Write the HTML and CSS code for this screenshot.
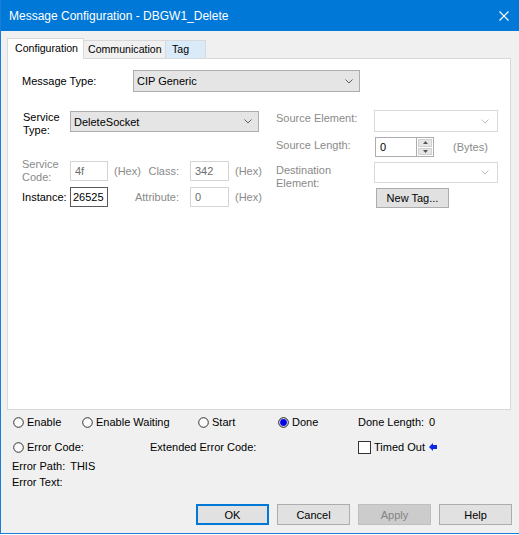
FILE: index.html
```html
<!DOCTYPE html>
<html>
<head>
<meta charset="utf-8">
<link rel="stylesheet" href="styles.css">
</head>
<body>
<div class="window">
  <div class="titlebar">
    <span class="title">Message Configuration - DBGW1_Delete</span>
    <svg class="close" width="10" height="10" viewBox="0 0 10 10"><path d="M0.5 0.5 L9.5 9.5 M9.5 0.5 L0.5 9.5" stroke="#fff" stroke-width="1.1" fill="none"/></svg>
  </div>
  <div class="tabs">
    <div class="tab active">Configuration</div>
    <div class="tab comm">Communication</div>
    <div class="tab tag">Tag</div>
  </div>
  <div class="panel">
    <div class="msg-row">
      <span class="msg-lbl">Message Type:</span>
      <div class="combo combo-msg"><span>CIP Generic</span><svg class="chev" width="8" height="5" viewBox="0 0 8 5"><path d="M0.5 0.5 L4 4 L7.5 0.5" fill="none" stroke="#606060"/></svg></div>
    </div>
    <div class="section">
      <div class="left">
        <div class="svc-row">
          <span class="two svc-lbl">Service<br>Type:</span>
          <div class="combo combo-svc"><span>DeleteSocket</span><svg class="chev" width="8" height="5" viewBox="0 0 8 5"><path d="M0.5 0.5 L4 4 L7.5 0.5" fill="none" stroke="#606060"/></svg></div>
        </div>
        <div class="lrow r-code">
          <span class="two dis">Service<br>Code:</span>
          <div class="field field-dis">4f</div>
          <div class="mid"><span class="dis">(Hex)</span><span class="dis">Class:</span></div>
          <div class="field field-dis">342</div>
          <span class="hex dis">(Hex)</span>
        </div>
        <div class="lrow r-inst">
          <span>Instance:</span>
          <div class="field field-on">26525</div>
          <div class="mid"><span></span><span class="dis">Attribute:</span></div>
          <div class="field field-dis">0</div>
          <span class="hex dis">(Hex)</span>
        </div>
      </div>
      <div class="right">
        <span class="rlbl dis">Source Element:</span>
        <div class="combo combo-dis"><span></span><svg class="chev" width="8" height="5" viewBox="0 0 8 5"><path d="M0.5 0.5 L4 4 L7.5 0.5" fill="none" stroke="#c0c0c0"/></svg></div>
        <span class="rlbl dis">Source Length:</span>
        <div class="len">
          <div class="field len-field">0</div>
          <div class="spin">
            <div class="spin-btn"><svg width="5" height="3" viewBox="0 0 5 3"><path d="M0 3 L2.5 0 L5 3 Z" fill="#555"/></svg></div>
            <div class="spin-btn"><svg width="5" height="3" viewBox="0 0 5 3"><path d="M0 0 L2.5 3 L5 0 Z" fill="#555"/></svg></div>
          </div>
          <span class="bytes dis">(Bytes)</span>
        </div>
        <span class="rlbl dis">Destination<br>Element:</span>
        <div class="combo combo-dis"><span></span><svg class="chev" width="8" height="5" viewBox="0 0 8 5"><path d="M0.5 0.5 L4 4 L7.5 0.5" fill="none" stroke="#c0c0c0"/></svg></div>
        <span></span>
        <div><div class="btn newtag">New Tag...</div></div>
      </div>
    </div>
  </div>
  <div class="status">
    <div class="opt c1"><svg width="11" height="11" viewBox="0 0 11 11"><circle cx="5.5" cy="5.5" r="4.8" fill="#fbfbfb" stroke="#333"/></svg><span>Enable</span></div>
    <div class="opt c2"><svg width="11" height="11" viewBox="0 0 11 11"><circle cx="5.5" cy="5.5" r="4.8" fill="#fbfbfb" stroke="#333"/></svg><span>Enable Waiting</span></div>
    <div class="opt c4"><svg width="11" height="11" viewBox="0 0 11 11"><circle cx="5.5" cy="5.5" r="4.8" fill="#fbfbfb" stroke="#333"/></svg><span>Start</span></div>
    <div class="opt c5"><svg width="11" height="11" viewBox="0 0 11 11"><circle cx="5.5" cy="5.5" r="4.8" fill="#fbfbfb" stroke="#111"/><circle cx="5.5" cy="5.5" r="3.4" fill="#0000e8"/></svg><span>Done</span></div>
    <div class="opt c6"><span class="dl">Done Length:</span><span>0</span></div>
    <div class="opt c12"><svg width="11" height="11" viewBox="0 0 11 11"><circle cx="5.5" cy="5.5" r="4.8" fill="#fbfbfb" stroke="#333"/></svg><span>Error Code:</span></div>
    <div class="opt c35"><span>Extended Error Code:</span></div>
    <div class="opt c6"><span class="check"></span><span>Timed Out</span><svg class="arrow" width="8" height="8" viewBox="0 0 8 8"><path d="M0 4 L4 0 L4 2 L8 2 L8 6 L4 6 L4 8 Z" fill="#0a28e6"/></svg></div>
  </div>
  <div class="err err-path"><span class="err-lbl">Error Path:</span><span>THIS</span></div>
  <div class="err err-text"><span>Error Text:</span></div>
  <div class="buttons">
    <div class="btn ok">OK</div>
    <div class="btn">Cancel</div>
    <div class="btn apply">Apply</div>
    <div class="btn">Help</div>
  </div>
</div>
</body>
</html>
```

FILE: styles.css
```css
html, body {
  margin: 0;
  padding: 0;
  background: #ffffff;
}

body {
  font-family: "Liberation Sans", Arial, sans-serif;
  font-size: 11px;
  color: #000;
}

.window {
  width: 519px;
  height: 534px;
  box-sizing: border-box;
  border-left: 1px solid #1a7ed6;
  border-bottom: 1px solid #1a7ed6;
  background: #f0f0f0;
  display: flex;
  flex-direction: column;
}

.titlebar {
  height: 31px;
  flex: none;
  background: #0078d7;
  color: #fff;
  display: flex;
  align-items: center;
  justify-content: space-between;
  padding: 0 10px 0 8px;
  font-size: 12px;
}

.title {
  line-height: 16px;
}

.close {
  display: block;
}

.tabs {
  display: flex;
  align-items: flex-end;
  height: 20px;
  margin: 7px 0 0 6px;
}

.tab {
  box-sizing: border-box;
  height: 18px;
  border: 1px solid #d9d9d9;
  border-bottom: 0;
  line-height: 17px;
  background: #f0f0f0;
  white-space: nowrap;
  font-size: 10.6px;
}

.tab.active {
  height: 21px;
  width: 77px;
  padding-left: 7px;
  line-height: 19px;
  background: #fff;
  margin-bottom: -1px;
  position: relative;
  z-index: 1;
}

.tab.comm {
  width: 82px;
  padding-left: 4px;
  border-left: 0;
}

.tab.tag {
  width: 40px;
  padding-left: 6px;
  border-left: 0;
  background: #d9eaf9;
}

.panel {
  box-sizing: border-box;
  width: 504px;
  height: 352px;
  flex: none;
  margin-left: 6px;
  background: #fff;
  border: 1px solid #d9d9d9;
  padding: 11px 0 0 14px;
}

.msg-row {
  display: flex;
  align-items: center;
  height: 22px;
}

.msg-lbl {
  width: 111px;
}

.combo {
  box-sizing: border-box;
  display: flex;
  align-items: center;
  justify-content: space-between;
  padding: 0 6px 0 3px;
  background: #e5e5e5;
  border: 1px solid #adadad;
}

.combo-msg {
  width: 227px;
  height: 22px;
}

.chev {
  display: block;
}

.section {
  display: flex;
  margin-top: 18px;
}

.left {
  width: 254px;
  padding-top: 1px;
}

.two {
  line-height: 13px;
}

.svc-row {
  display: flex;
  align-items: flex-start;
}

.svc-lbl {
  width: 48px;
  padding-left: 1px;
  box-sizing: border-box;
}

.combo-svc {
  width: 189px;
  height: 21px;
}

.lrow {
  display: grid;
  grid-template-columns: 48px 38px 82px 39px auto;
  grid-template-rows: 20px;
  align-items: center;
}

.r-code {
  margin-top: 24px;
}

.r-inst {
  margin-top: 6px;
}

.dis {
  color: #8a8a8a;
}

.field {
  box-sizing: border-box;
  height: 20px;
  line-height: 18px;
  padding-left: 4px;
  background: #fff;
  border: 1px solid #cfcfcf;
}

.field-dis {
  color: #6d6d6d;
  border-color: #d4d4d4;
}

.field-on {
  border-color: #5a5a5a;
  padding-left: 2px;
}

.mid {
  display: flex;
  justify-content: space-between;
  padding: 0 11px 0 6px;
}

.hex {
  padding-left: 6px;
}

.right {
  display: grid;
  grid-template-columns: 98px 124px;
  grid-template-rows: 22px 20px 21px 20px;
  row-gap: 5px;
}

.rlbl {
  align-self: start;
  margin-top: 2px;
  line-height: 13px;
}

.combo-dis {
  background: #fff;
  border-color: #d9d9d9;
  padding-right: 8px;
}

.len {
  display: flex;
  align-items: center;
  padding-left: 1px;
}

.len-field {
  width: 41px;
  border-color: #abadb3;
  border-right: 0;
}

.spin {
  box-sizing: border-box;
  width: 18px;
  height: 20px;
  display: flex;
  flex-direction: column;
  border: 1px solid #abadb3;
  background: #fff;
  padding: 1px;
  gap: 1px;
}

.spin-btn {
  flex: 1;
  background: #e6e6e6;
  border: 1px solid #d0d0d0;
  display: flex;
  align-items: center;
  justify-content: center;
}

.spin-btn svg {
  display: block;
}

.bytes {
  margin-left: 19px;
}

.btn {
  box-sizing: border-box;
  width: 73px;
  height: 21px;
  display: flex;
  align-items: center;
  justify-content: center;
  background: #e1e1e1;
  border: 1px solid #adadad;
}

.newtag {
  height: 20px;
  margin-left: 2px;
}

.status {
  display: grid;
  grid-template-columns: 69px 68px 48px 80px 80px auto;
  grid-template-rows: 16px 16px;
  row-gap: 9px;
  margin-top: 4px;
  padding-left: 12px;
}

.opt {
  display: flex;
  align-items: center;
  white-space: nowrap;
}

.opt svg {
  display: block;
  flex: none;
}

.opt svg + span {
  margin-left: 3px;
}

.c1 { grid-column: 1; }
.c2 { grid-column: 2 / span 2; }
.c4 { grid-column: 4; }
.c5 { grid-column: 5; }
.c6 { grid-column: 6; }
.c12 { grid-column: 1 / span 2; }
.c35 { grid-column: 3 / span 3; }

.dl {
  margin-right: 5px;
}

.check {
  box-sizing: border-box;
  width: 13px;
  height: 13px;
  border: 1px solid #333;
  background: #fff;
  margin-right: 3px;
}

.arrow {
  margin-left: 4px;
}

.err {
  padding-left: 11px;
  line-height: 14px;
}

.err-path {
  margin-top: 4px;
  display: flex;
}

.err-lbl {
  margin-right: 5px;
}

.err-text {
  margin-top: 2px;
}

.buttons {
  display: flex;
  justify-content: flex-end;
  gap: 8px;
  margin-top: 15px;
  padding-right: 7px;
}

.ok {
  border: 2px solid #0078d7;
}

.apply {
  background: #cccccc;
  border-color: #bfbfbf;
  color: #838383;
}
```
